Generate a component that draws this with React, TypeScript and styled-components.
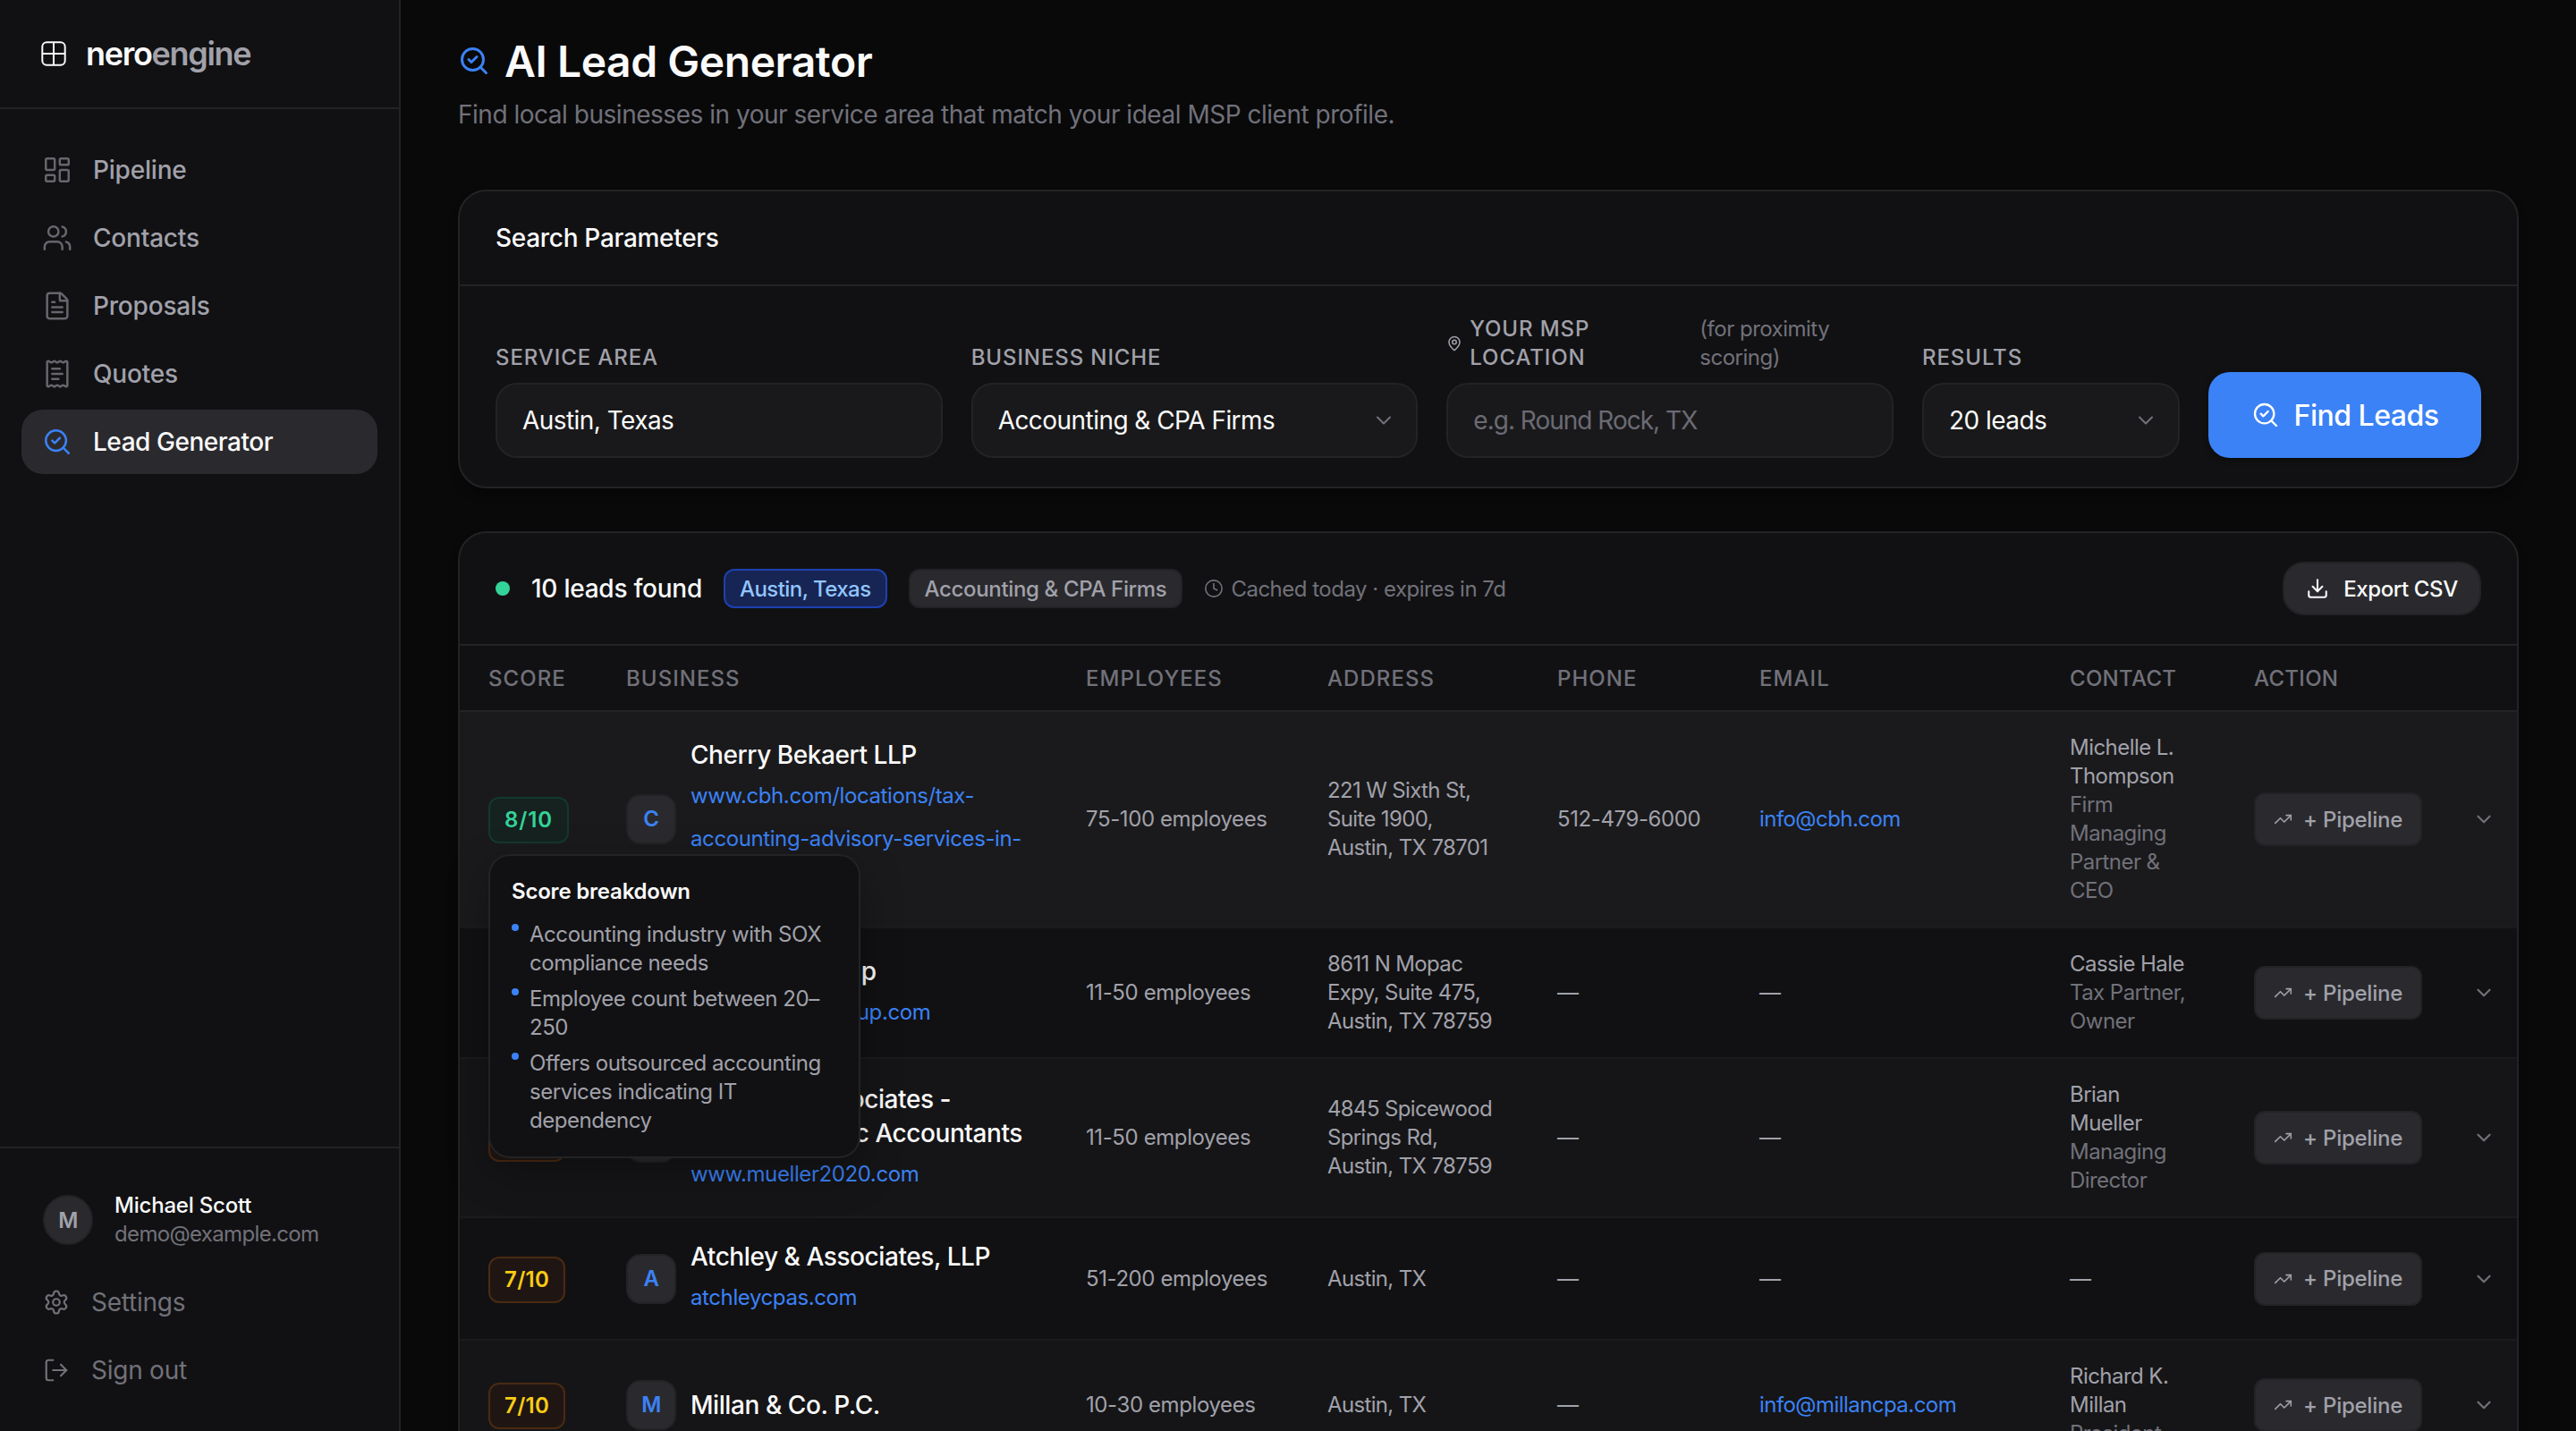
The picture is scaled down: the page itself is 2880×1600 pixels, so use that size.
import { useState } from "react";
import styled, { createGlobalStyle, css } from "styled-components";
import {
  ChevronDown,
  Clock,
  Download,
  FileText,
  LayoutDashboard,
  LogOut,
  MapPin,
  ReceiptText,
  SearchCheck,
  Settings,
  TrendingUp,
  Users,
} from "lucide-react";

const GlobalStyle = createGlobalStyle`
  * {
    box-sizing: border-box;
  }
  body {
    margin: 0;
    background: #09090a;
    color: #fafafa;
    font-family: "Inter", "Liberation Sans", sans-serif;
    font-size: 28px;
    letter-spacing: -0.4px;
    overflow: hidden;
  }
  button,
  input {
    font-family: inherit;
  }
`;

const Layout = styled.div`
  display: flex;
  width: 2880px;
  height: 1600px;
  overflow: hidden;
`;

/* ---------- sidebar ---------- */

const Sidebar = styled.aside`
  display: flex;
  flex-direction: column;
  width: 448px;
  height: 100%;
  flex-shrink: 0;
  background: #111113;
  border-right: 2px solid #232326;
`;

const Brand = styled.div`
  display: flex;
  align-items: center;
  gap: 20px;
  height: 122px;
  padding: 0 44px;
  border-bottom: 2px solid #232326;
`;

const BrandName = styled.span`
  font-size: 36px;
  font-weight: 600;
  letter-spacing: -1.3px;
  span {
    color: #a1a1aa;
  }
`;

const Nav = styled.nav`
  display: flex;
  flex-direction: column;
  flex: 1;
  gap: 4px;
  padding: 32px 24px;
`;

const NavItem = styled.a<{ $active?: boolean }>`
  display: flex;
  align-items: center;
  gap: 23px;
  height: 72px;
  padding: 0 23px;
  border-radius: 24px;
  font-size: 28px;
  font-weight: 500;
  letter-spacing: -0.2px;
  color: #a1a1aa;
  svg {
    color: #66666e;
  }
  ${({ $active }) =>
    $active &&
    css`
      background: #2a2a2e;
      color: #fafafa;
      letter-spacing: -0.46px;
      svg {
        color: #3b82f6;
      }
    `}
`;

const SidebarFooter = styled.div`
  display: flex;
  flex-direction: column;
  height: 318px;
  padding: 32px 24px;
  border-top: 2px solid #232326;
`;

const Profile = styled.div`
  display: flex;
  align-items: center;
  gap: 24px;
  height: 96px;
  margin-bottom: 4px;
  padding: 0 24px;
`;

const Avatar = styled.div`
  display: flex;
  align-items: center;
  justify-content: center;
  width: 56px;
  height: 56px;
  border: 2px solid #232326;
  border-radius: 50%;
  background: #2a2a2e;
  color: #a1a1aa;
  font-size: 24px;
  font-weight: 600;
`;

const ProfileText = styled.div`
  display: flex;
  flex-direction: column;
  font-size: 24px;
  line-height: 32px;
  letter-spacing: -0.65px;
  color: #71717a;
  strong {
    color: #fafafa;
    font-weight: 500;
    letter-spacing: -0.2px;
  }
`;

const FooterLink = styled.a`
  display: flex;
  align-items: center;
  gap: 24px;
  height: 72px;
  margin-top: 4px;
  padding: 0 24px;
  color: #71717a;
  font-size: 28px;
  letter-spacing: -0.25px;
`;

/* ---------- page ---------- */

const Main = styled.main`
  display: flex;
  flex-direction: column;
  flex: 1;
  min-width: 0;
  padding: 40px 64px 0;
`;

const Title = styled.h1`
  display: flex;
  align-items: center;
  gap: 16px;
  height: 56px;
  margin: 0;
  font-size: 48px;
  font-weight: 600;
  letter-spacing: -0.45px;
  svg {
    color: #3b82f6;
  }
`;

const Subtitle = styled.p`
  margin: 12px 0 0;
  height: 40px;
  line-height: 40px;
  font-size: 28px;
  letter-spacing: -0.48px;
  color: #71717a;
`;

const Card = styled.section`
  flex-shrink: 0;
  background: #111113;
  border: 2px solid #232326;
  border-radius: 32px;
  box-shadow: 0 8px 12px -2px rgba(0, 0, 0, 0.4);
`;

const SearchCard = styled(Card)`
  margin-top: 64px;
`;

const CardTitle = styled.h2`
  display: flex;
  align-items: center;
  height: 106px;
  margin: 0;
  padding: 0 40px;
  border-bottom: 2px solid #232326;
  font-size: 28px;
  font-weight: 500;
  letter-spacing: -0.3px;
`;

const SearchForm = styled.div`
  display: grid;
  grid-template-columns: 1fr 1fr 1fr 288px 305px;
  gap: 32px;
  align-items: end;
  padding: 32px 40px;
`;

const Field = styled.div`
  display: flex;
  flex-direction: column;
  gap: 12px;
  min-width: 0;
`;

const Label = styled.label`
  display: flex;
  align-items: center;
  font-size: 24px;
  font-weight: 500;
  line-height: 32px;
  letter-spacing: 0.9px;
  color: #a1a1aa;
  svg {
    flex-shrink: 0;
    margin-right: 8px;
  }
`;

const LabelText = styled.span`
  width: 257px;
`;

const LabelHint = styled.span`
  color: #71717a;
  font-weight: 400;
  letter-spacing: -0.5px;
`;

const control = css`
  height: 84px;
  width: 100%;
  padding: 0 28px;
  background: #19191b;
  border: 2px solid #232326;
  border-radius: 24px;
  color: #fafafa;
  font-size: 28px;
  letter-spacing: -0.55px;
`;

const Input = styled.input`
  ${control}
  outline: none;
  &::placeholder {
    color: #6b6b74;
    letter-spacing: -1px;
    opacity: 1;
  }
`;

const SelectBox = styled.div`
  ${control}
  display: flex;
  align-items: center;
  justify-content: space-between;
  padding-right: 22px;
  svg {
    color: #71717a;
  }
`;

const FindButton = styled.button`
  display: flex;
  align-items: center;
  justify-content: center;
  gap: 16px;
  height: 96px;
  padding: 0;
  border: none;
  border-radius: 24px;
  background: #3b82f6;
  box-shadow: 0 2px 6px rgba(0, 0, 0, 0.4);
  color: #fff;
  font-size: 32px;
  font-weight: 500;
  letter-spacing: -0.5px;
`;

/* ---------- results ---------- */

const ResultsCard = styled(Card)`
  margin-top: 48px;
`;

const ResultsHeader = styled.div`
  display: flex;
  align-items: center;
  height: 126px;
  padding: 0 40px;
  border-bottom: 2px solid #232326;
`;

const StatusDot = styled.span`
  width: 16px;
  height: 16px;
  border-radius: 50%;
  background: #34d399;
`;

const Found = styled.span`
  margin: 0 24px;
  font-size: 28px;
  font-weight: 500;
  letter-spacing: -0.25px;
`;

const Tag = styled.span<{ $blue?: boolean }>`
  display: flex;
  align-items: center;
  height: 44px;
  margin-right: 24px;
  padding: 0 16px;
  border: 2px solid ${({ $blue }) => ($blue ? "#1e40af" : "#232326")};
  border-radius: 12px;
  background: ${({ $blue }) => ($blue ? "#172554" : "#2a2a2e")};
  color: ${({ $blue }) => ($blue ? "#93c5fd" : "#a1a1aa")};
  font-size: 24px;
  font-weight: 500;
  letter-spacing: ${({ $blue }) => ($blue ? "-0.55px" : "-0.35px")};
`;

const Cached = styled.span`
  display: flex;
  align-items: center;
  gap: 8px;
  color: #71717a;
  font-size: 24px;
  letter-spacing: -0.5px;
`;

const ExportButton = styled.button`
  display: flex;
  align-items: center;
  justify-content: center;
  gap: 16px;
  width: 222px;
  height: 60px;
  margin-left: auto;
  padding: 0;
  border: 2px solid #232326;
  border-radius: 24px;
  background: #2a2a2e;
  color: #fafafa;
  font-size: 24px;
  font-weight: 500;
  letter-spacing: -0.4px;
`;

const columns = css`
  display: grid;
  grid-template-columns: 154px 514px 270px 257px 226px 347px 206px 252px 74px;
  align-items: center;
`;

const HeadRow = styled.div`
  ${columns}
  height: 74px;
  border-bottom: 2px solid #232326;
  color: #71717a;
  font-size: 24px;
  font-weight: 500;
`;

const HeadCell = styled.div<{ $tight?: boolean }>`
  padding-left: 32px;
  letter-spacing: ${({ $tight }) => ($tight ? "0.3px" : "1.05px")};
`;

const Row = styled.div<{ $hover?: boolean; $odd?: boolean }>`
  ${columns}
  border-bottom: 2px solid #1b1b1e;
  background: ${({ $hover, $odd }) =>
    $hover ? "#1a1a1c" : $odd ? "#151517" : "transparent"};
`;

const Cell = styled.div`
  padding: 24px 0 24px 32px;
  font-size: 24px;
  line-height: 32px;
  letter-spacing: -0.4px;
  color: #a1a1aa;
  white-space: nowrap;
`;

const AddressCell = styled(Cell)`
  letter-spacing: -0.65px;
`;

const ContactCell = styled(Cell)`
  letter-spacing: -0.55px;
`;

const ScoreWrap = styled.div`
  position: relative;
  display: inline-flex;
  padding-top: 2px;
`;

const Score = styled.span<{ $good?: boolean }>`
  display: inline-flex;
  align-items: center;
  justify-content: center;
  height: 52px;
  padding: 0 16px;
  border: 2px solid ${({ $good }) => ($good ? "#14382e" : "#4a2a12")};
  border-radius: 12px;
  background: ${({ $good }) => ($good ? "#152220" : "#1f1613")};
  color: ${({ $good }) => ($good ? "#34d399" : "#facc15")};
  font-size: 24px;
  font-weight: 600;
  letter-spacing: ${({ $good }) => ($good ? "0.9px" : "0.3px")};
`;

const Tooltip = styled.div`
  position: absolute;
  z-index: 10;
  top: calc(100% + 12px);
  left: 0;
  width: 416px;
  padding: 24px;
  background: #111113;
  border: 2px solid #232326;
  border-radius: 24px;
  box-shadow: 0 16px 48px rgba(0, 0, 0, 0.3);
`;

const TooltipTitle = styled.div`
  margin-bottom: 16px;
  color: #fafafa;
  font-weight: 600;
  letter-spacing: -0.2px;
`;

const Reasons = styled.ul`
  display: flex;
  flex-direction: column;
  gap: 8px;
  margin: 0;
  padding: 0;
  list-style: none;
  letter-spacing: -0.45px;
`;

const Reason = styled.li`
  display: flex;
  gap: 12px;
  &::before {
    content: "";
    width: 8px;
    height: 8px;
    margin-top: 4px;
    border-radius: 50%;
    background: #3b82f6;
  }
`;

const Business = styled.div`
  display: flex;
  align-items: center;
  gap: 16px;
`;

const Initial = styled.div`
  display: flex;
  align-items: center;
  justify-content: center;
  width: 56px;
  height: 56px;
  border: 2px solid #232326;
  border-radius: 16px;
  background: #2a2a2e;
  color: #3b82f6;
  font-size: 24px;
  font-weight: 600;
`;

const BusinessName = styled.div`
  color: #fafafa;
  font-size: 28px;
  font-weight: 500;
  line-height: 38px;
  letter-spacing: -0.43px;
`;

const Website = styled.div`
  height: 48px;
  padding-top: 3px;
  line-height: 48px;
  color: #3b82f6;
  &:last-child {
    height: 49px;
  }
`;

const Email = styled.a`
  color: #3b82f6;
  letter-spacing: -0.55px;
`;

const Role = styled.span`
  color: #71717a;
`;

const PipelineButton = styled.button`
  display: flex;
  align-items: center;
  gap: 12px;
  width: 188px;
  height: 60px;
  padding: 0 20px;
  border: 2px solid #232326;
  border-radius: 12px;
  background: #2a2a2e;
  color: #a1a1aa;
  font-size: 24px;
  font-weight: 500;
  letter-spacing: -0.25px;
`;

const Expand = styled.div`
  display: flex;
  justify-content: center;
  color: #71717a;
`;

interface Lead {
  score: number;
  name: string[];
  website: string[];
  employees: string;
  address: string[];
  phone?: string;
  email?: string;
  contact?: string[];
  role?: string[];
  reasons?: string[][];
}

const leads: Lead[] = [
  {
    score: 8,
    name: ["Cherry Bekaert LLP"],
    website: [
      "www.cbh.com/locations/tax-",
      "accounting-advisory-services-in-",
      "austin",
    ],
    employees: "75-100 employees",
    address: ["221 W Sixth St,", "Suite 1900,", "Austin, TX 78701"],
    phone: "512-479-6000",
    email: "info@cbh.com",
    contact: ["Michelle L.", "Thompson"],
    role: ["Firm", "Managing", "Partner &", "CEO"],
    reasons: [
      ["Accounting industry with SOX", "compliance needs"],
      ["Employee count between 20–", "250"],
      ["Offers outsourced accounting", "services indicating IT", "dependency"],
    ],
  },
  {
    score: 7,
    name: ["Hale CPA Group"],
    website: ["www.halecpagroup.com"],
    employees: "11-50 employees",
    address: ["8611 N Mopac", "Expy, Suite 475,", "Austin, TX 78759"],
    contact: ["Cassie Hale"],
    role: ["Tax Partner,", "Owner"],
  },
  {
    score: 7,
    name: ["Mueller & Associates -", "Certified Public Accountants"],
    website: ["www.mueller2020.com"],
    employees: "11-50 employees",
    address: ["4845 Spicewood", "Springs Rd,", "Austin, TX 78759"],
    contact: ["Brian", "Mueller"],
    role: ["Managing", "Director"],
  },
  {
    score: 7,
    name: ["Atchley & Associates, LLP"],
    website: ["atchleycpas.com"],
    employees: "51-200 employees",
    address: ["Austin, TX"],
  },
  {
    score: 7,
    name: ["Millan & Co. P.C."],
    website: [],
    employees: "10-30 employees",
    address: ["Austin, TX"],
    email: "info@millancpa.com",
    contact: ["Richard K.", "Millan"],
    role: ["President"],
  },
];

const navItems = [
  { label: "Pipeline", icon: LayoutDashboard },
  { label: "Contacts", icon: Users },
  { label: "Proposals", icon: FileText },
  { label: "Quotes", icon: ReceiptText },
  { label: "Lead Generator", icon: SearchCheck },
];

const headings = [
  "SCORE",
  "BUSINESS",
  "EMPLOYEES",
  "ADDRESS",
  "PHONE",
  "EMAIL",
  "CONTACT",
  "ACTION",
  "",
];

const Lines = ({ items }: { items: string[] }) => (
  <>
    {items.map((line) => (
      <div key={line}>{line}</div>
    ))}
  </>
);

const Logo = () => (
  <svg
    width="32"
    height="32"
    viewBox="0 0 32 32"
    fill="none"
    stroke="#fafafa"
    strokeWidth="2"
  >
    <rect x="3.3" y="3.3" width="25.4" height="25.4" rx="5" />
    <path d="M16 3.3v25.4M3.3 16h25.4" />
  </svg>
);

function LeadRow({ lead, index }: { lead: Lead; index: number }) {
  return (
    <Row $hover={index === 0} $odd={index % 2 === 0}>
      <Cell>
        <ScoreWrap>
          <Score $good={lead.score >= 8}>{lead.score}/10</Score>
          {lead.reasons && (
            <Tooltip>
              <TooltipTitle>Score breakdown</TooltipTitle>
              <Reasons>
                {lead.reasons.map((reason) => (
                  <Reason key={reason[0]}>
                    <div>
                      <Lines items={reason} />
                    </div>
                  </Reason>
                ))}
              </Reasons>
            </Tooltip>
          )}
        </ScoreWrap>
      </Cell>
      <Cell>
        <Business>
          <Initial>{lead.name[0][0]}</Initial>
          <div>
            {lead.name.map((line) => (
              <BusinessName key={line}>{line}</BusinessName>
            ))}
            {lead.website.map((line) => (
              <Website key={line}>{line}</Website>
            ))}
          </div>
        </Business>
      </Cell>
      <Cell>{lead.employees}</Cell>
      <AddressCell>
        <Lines items={lead.address} />
      </AddressCell>
      <Cell>{lead.phone ?? "—"}</Cell>
      <Cell>{lead.email ? <Email>{lead.email}</Email> : "—"}</Cell>
      <ContactCell>
        {lead.contact ? <Lines items={lead.contact} /> : "—"}
        {lead.role && (
          <Role>
            <Lines items={lead.role} />
          </Role>
        )}
      </ContactCell>
      <Cell>
        <PipelineButton>
          <TrendingUp size={22} strokeWidth={1.75} />+ Pipeline
        </PipelineButton>
      </Cell>
      <Expand>
        <ChevronDown size={26} strokeWidth={2} />
      </Expand>
    </Row>
  );
}

function App() {
  const [area, setArea] = useState<string>("Austin, Texas");
  const [location, setLocation] = useState<string>("");

  return (
    <Layout>
      <GlobalStyle />
      <Sidebar>
        <Brand>
          <Logo />
          <BrandName>
            nero<span>engine</span>
          </BrandName>
        </Brand>
        <Nav>
          {navItems.map(({ label, icon: Icon }) => (
            <NavItem key={label} $active={label === "Lead Generator"}>
              <Icon size={34} strokeWidth={1.75} />
              {label}
            </NavItem>
          ))}
        </Nav>
        <SidebarFooter>
          <Profile>
            <Avatar>M</Avatar>
            <ProfileText>
              <strong>Michael Scott</strong>
              <span>demo@example.com</span>
            </ProfileText>
          </Profile>
          <FooterLink>
            <Settings size={30} strokeWidth={1.75} />
            Settings
          </FooterLink>
          <FooterLink>
            <LogOut size={30} strokeWidth={1.75} />
            Sign out
          </FooterLink>
        </SidebarFooter>
      </Sidebar>

      <Main>
        <Title>
          <SearchCheck size={36} strokeWidth={2} />
          AI Lead Generator
        </Title>
        <Subtitle>
          Find local businesses in your service area that match your ideal MSP
          client profile.
        </Subtitle>

        <SearchCard>
          <CardTitle>Search Parameters</CardTitle>
          <SearchForm>
            <Field>
              <Label>SERVICE AREA</Label>
              <Input value={area} onChange={(e) => setArea(e.target.value)} />
            </Field>
            <Field>
              <Label>BUSINESS NICHE</Label>
              <SelectBox>
                Accounting &amp; CPA Firms
                <ChevronDown size={28} strokeWidth={1.8} />
              </SelectBox>
            </Field>
            <Field>
              <Label>
                <MapPin size={18} strokeWidth={2} />
                <LabelText>
                  YOUR MSP
                  <br />
                  LOCATION
                </LabelText>
                <LabelHint>
                  (for proximity
                  <br />
                  scoring)
                </LabelHint>
              </Label>
              <Input
                value={location}
                placeholder="e.g. Round Rock, TX"
                onChange={(e) => setLocation(e.target.value)}
              />
            </Field>
            <Field>
              <Label>RESULTS</Label>
              <SelectBox>
                20 leads
                <ChevronDown size={28} strokeWidth={1.8} />
              </SelectBox>
            </Field>
            <FindButton>
              <SearchCheck size={32} strokeWidth={1.75} />
              Find Leads
            </FindButton>
          </SearchForm>
        </SearchCard>

        <ResultsCard>
          <ResultsHeader>
            <StatusDot />
            <Found>10 leads found</Found>
            <Tag $blue>Austin, Texas</Tag>
            <Tag>Accounting &amp; CPA Firms</Tag>
            <Cached>
              <Clock size={22} strokeWidth={1.75} />
              Cached today · expires in 7d
            </Cached>
            <ExportButton>
              <Download size={26} strokeWidth={1.9} />
              Export CSV
            </ExportButton>
          </ResultsHeader>
          <HeadRow>
            {headings.map((heading, index) => (
              <HeadCell key={heading} $tight={index > 5}>
                {heading}
              </HeadCell>
            ))}
          </HeadRow>
          {leads.map((lead, index) => (
            <LeadRow key={lead.name[0]} lead={lead} index={index} />
          ))}
        </ResultsCard>
      </Main>
    </Layout>
  );
}

export default App;
